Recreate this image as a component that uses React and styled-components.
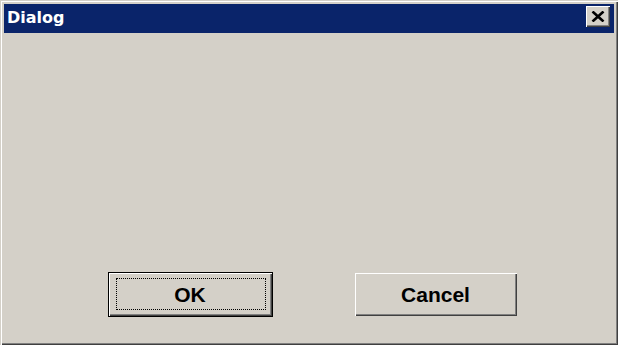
import React from 'react'
import styled, { createGlobalStyle } from 'styled-components'

const Global = createGlobalStyle`
	html, body {
		margin: 0;
		padding: 0;
		background: #d4d0c8;
	}
	body {
		width: 618px;
		height: 345px;
		overflow: hidden;
	}
`

const Window = styled.div`
	box-sizing: border-box;
	display: flex;
	flex-direction: column;
	width: 618px;
	height: 345px;
	padding: 4px;
	background: #d4d0c8;
	box-shadow: inset 1px 1px 0 #d4d0c8, inset 2px 2px 0 #ffffff, inset -1px -1px 0 #404040,
		inset -2px -2px 0 #808080;
`

const TitleBar = styled.div`
	display: flex;
	align-items: center;
	justify-content: space-between;
	height: 29px;
	padding: 0 4px 0 3px;
	background: #0a246a;
`

const Title = styled.span`
	color: #ffffff;
	font-family: 'DejaVu Sans', sans-serif;
	font-weight: bold;
	font-size: 16px;
	line-height: 1;
	margin-top: -1px;
`

const CloseButton = styled.div`
	display: flex;
	align-items: center;
	justify-content: center;
	width: 24px;
	height: 21px;
	margin-top: -4px;
	background: #d4d0c8;
	box-shadow: inset 1px 1px 0 #ffffff, inset -1px -1px 0 #404040, inset -2px -2px 0 #808080;
`

const Body = styled.div`
	flex: 1;
	display: flex;
	align-items: flex-end;
	justify-content: center;
	gap: 82px;
	padding: 0 0 24px 6px;
`

const Button = styled.div`
	position: relative;
	box-sizing: border-box;
	display: flex;
	align-items: center;
	justify-content: center;
	width: ${({ $default }) => ($default ? 165 : 162)}px;
	height: ${({ $default }) => ($default ? 45 : 43)}px;
	margin-bottom: ${({ $default }) => ($default ? 0 : 1)}px;
	background: #d4d0c8;
	border: ${({ $default }) => ($default ? '1px solid #000000' : 'none')};
	box-shadow: inset 1px 1px 0 #ffffff, inset -1px -1px 0 #404040, inset -2px -2px 0 #808080;
	font-family: 'Liberation Sans', Arial, sans-serif;
	font-weight: bold;
	font-size: 21px;
	color: #000000;
	&::after {
		content: '';
		display: ${({ $focused }) => ($focused ? 'block' : 'none')};
		position: absolute;
		inset: 5px 6px 6px 7px;
		border: 1px dotted #000000;
	}
`

const App = () => (
	<>
		<Global />
		<Window>
			<TitleBar>
				<Title>Dialog</Title>
				<CloseButton>
					<svg width='14' height='11' viewBox='0 0 14 11'>
						<path d='M1.5 0.5 L12.5 10.5 M12.5 0.5 L1.5 10.5' stroke='#000' strokeWidth='2.6' />
					</svg>
				</CloseButton>
			</TitleBar>
			<Body>
				<Button $default $focused>
					OK
				</Button>
				<Button>Cancel</Button>
			</Body>
		</Window>
	</>
)

export default App
